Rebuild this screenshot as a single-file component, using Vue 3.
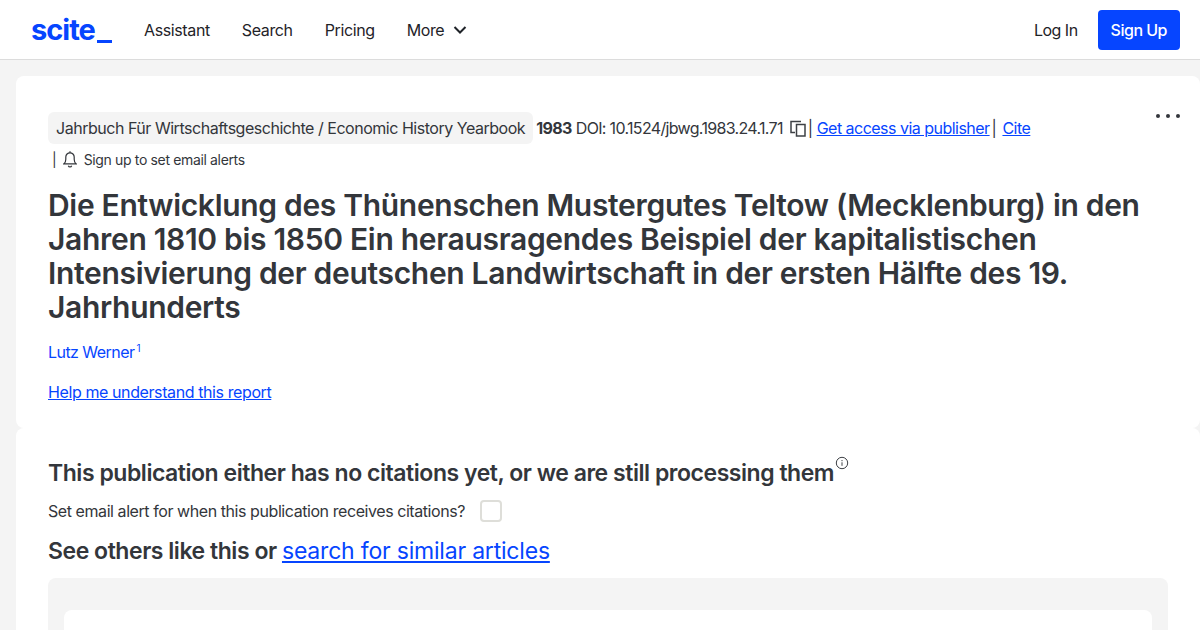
<script setup>
const navLinks = ['Assistant', 'Search', 'Pricing']
</script>

<template>
  <div class="page">
    <header class="nav">
      <div class="logo"><span>scite</span><span class="under"></span></div>
      <nav class="links">
        <a v-for="l in navLinks" :key="l">{{ l }}</a>
        <a class="more">More
          <svg width="14" height="14" viewBox="0 0 14 14" fill="none" stroke="#1f2328" stroke-width="2"><path d="M1.500 4l5.500 5.500 5.500-5.500" /></svg>
        </a>
      </nav>
      <div class="auth">
        <a class="login">Log In</a>
        <a class="signup">Sign Up</a>
      </div>
    </header>
    <main class="main">
      <section class="card first">
        <div class="dots"><i></i><i></i><i></i></div>
        <div class="meta">
          <span class="journal">Jahrbuch Für Wirtschaftsgeschichte / Economic History Yearbook</span>
          <b class="year">1983</b>
          <span class="doi">DOI: 10.1524/jbwg.1983.24.1.71</span>
          <svg class="copy" width="16" height="17" viewBox="0 0 16 17" fill="none" stroke="#3d4045" stroke-width="1.500"><path d="M11 1.500H1v11h4" /><rect x="6.500" y="4.500" width="8.500" height="11.500" /></svg>
          <span class="sep">|</span>
          <a class="link">Get access via publisher</a>
          <span class="sep sep2">|</span>
          <a class="link">Cite</a>
        </div>
        <div class="alerts">
          <span class="bar">|</span>
          <svg width="14" height="17" viewBox="0 0 14 17" fill="none" stroke="#33363b" stroke-width="1.200"><path d="M1 12.800c1.300-1 1.800-2.500 1.800-4.500V6a4.200 4.200 0 0 1 8.400 0v2.300c0 2 .5 3.500 1.800 4.500z" /><path d="M5.300 14.800a1.800 1.800 0 0 0 3.400 0" /><path d="M7 .3v1.500" /></svg>
          <span class="alert-text">Sign up to set email alerts</span>
        </div>
        <h1>Die Entwicklung des Thünenschen Mustergutes Teltow (Mecklenburg) in den Jahren 1810 bis 1850 Ein herausragendes Beispiel der kapitalistischen Intensivierung der deutschen Landwirtschaft in der ersten Hälfte des 19. Jahrhunderts</h1>
        <p class="author"><a>Lutz Werner</a><sup>1</sup></p>
        <a class="link help">Help me understand this report</a>
      </section>
      <section class="card second">
        <h2 class="status">This publication either has no citations yet, or we are still processing them<svg class="info" width="14" height="14" viewBox="0 0 14 14" fill="none" stroke="#3d4045"><circle cx="7" cy="7" r="5.700" /><path d="M7 6.300v3.500M7 4v1.200" /></svg></h2>
        <div class="alert-row">
          <span>Set email alert for when this publication receives citations?</span>
          <span class="check"></span>
        </div>
        <h2 class="others">See others like this or <a>search for similar articles</a></h2>
        <div class="panel"><div class="inner"></div></div>
      </section>
    </main>
  </div>
</template>

<style>
html, body { margin: 0; background: #f4f4f4; overflow: hidden; }
</style>

<style scoped>
.page { width: 1200px; height: 630px; overflow: hidden; font-family: Inter, "Liberation Sans", sans-serif; color: #33363b; }
.nav { height: 59px; background: #fff; border-bottom: 1px solid #dcdcdc; display: flex; align-items: center; padding: 0 20px 0 31px; letter-spacing: -0.38px; }
.logo { display: flex; align-items: flex-end; font-size: 29px; font-weight: 700; color: #0645ff; letter-spacing: -1px; width: 81px; height: 30px; line-height: 30px; }
.under { flex: none; width: 15px; height: 3px; background: #0645ff; margin: 0 0 2px 2px; }
.links { display: flex; gap: 32px; margin-left: 32px; font-size: 16px; color: #1f2328; flex: 1; }
.more { display: flex; align-items: center; gap: 9px; }
.auth { display: flex; align-items: center; gap: 20px; font-size: 16px; letter-spacing: -0.5px; }
.login { color: #1f2328; }
.signup { background: #0645ff; color: #fff; font-weight: 500; border-radius: 4px; padding: 0 13px; height: 40px; line-height: 40px; }
.main { padding: 16px 0 0 16px; }
.card { background: #fff; border-radius: 8px; padding: 0 32px; }
.first { position: relative; height: 352px; padding-top: 36px; box-sizing: border-box; }
.dots { position: absolute; top: 38px; right: 20px; display: flex; gap: 6px; }
.dots i { width: 4px; height: 4px; border-radius: 50%; background: #33363b; }
.meta { display: flex; align-items: center; font-size: 16px; height: 32px; white-space: nowrap; letter-spacing: -0.475px; }
.journal { background: #f4f4f4; border-radius: 6px; height: 32px; line-height: 32px; padding: 0 8px; margin-right: 3px; }
.year { font-weight: 700; margin-right: 4px; letter-spacing: -0.6px; }
.doi { letter-spacing: -0.67px; }
.copy { margin: 0 1px 0 7px; }
.sep { margin: 0 4px 0 1px; }
.sep2 { margin: 0 6px 0 2px; }
.link { color: #0645ff; text-decoration: underline; }
.meta .link { letter-spacing: -0.52px; }
.alerts { display: flex; align-items: center; gap: 6px; font-size: 14px; height: 31px; }
.alert-text { letter-spacing: -0.35px; margin-left: 1px; }
.bar { margin: 0 0 0 4px; font-size: 14px; }
h1 { margin: 13px 0 0; font-size: 30px; font-weight: 600; line-height: 34px; width: 1100px; letter-spacing: -0.31px; }
.author { margin: 12px 0 0; font-size: 16px; line-height: 24px; }
.author a { color: #0645ff; letter-spacing: -0.55px; }
.author sup { font-size: 10px; margin-left: 2px; color: #0645ff; }
.help { display: block; margin-top: 16px; font-size: 16px; line-height: 24px; letter-spacing: -0.4px; }
.status { margin: 0; padding-top: 28px; font-size: 23px; font-weight: 600; line-height: 30px; letter-spacing: -0.46px; }
.info { vertical-align: 11px; margin-left: 1px; }
.alert-row { display: flex; align-items: center; gap: 15px; font-size: 16px; height: 32px; margin-top: 7px; letter-spacing: -0.43px; }
.check { width: 18px; height: 18px; border: 2px solid #deded9; border-radius: 4px; }
.others { margin: 9px 0 0; font-size: 23px; font-weight: 600; line-height: 30px; letter-spacing: -0.46px; }
.others a { color: #0645ff; font-weight: 400; text-decoration: underline; letter-spacing: -0.2px; }
.panel { margin-top: 12px; background: #f4f4f4; border-radius: 8px; padding: 32px 16px 16px; }
.inner { background: #fff; border-radius: 8px; height: 200px; }
</style>
